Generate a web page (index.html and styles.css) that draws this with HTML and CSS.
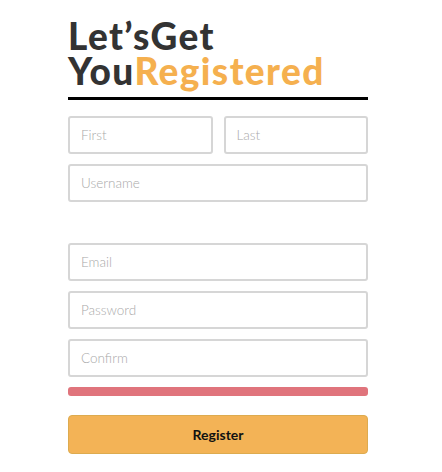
FILE: index.html
```html
<!DOCTYPE html>
<html>
<head>
<meta charset="utf-8">
<link rel="stylesheet" href="styles.css">
</head>
<body>
<div class="wrap">
  <h1 class="title">Let’sGet<br>You<span class="accent">Registered</span></h1>
  <form class="form">
    <div class="row">
      <input class="field" type="text" placeholder="First">
      <input class="field" type="text" placeholder="Last">
    </div>
    <input class="field" type="text" placeholder="Username">
    <div class="spacer"></div>
    <input class="field" type="email" placeholder="Email">
    <input class="field" type="password" placeholder="Password">
    <input class="field" type="password" placeholder="Confirm">
    <div class="strength"></div>
    <button class="btn" type="button">Register</button>
  </form>
</div>
</body>
</html>
```

FILE: styles.css
```css
html, body {
  margin: 0;
  padding: 0;
  background: #fff;
}
body {
  font-family: Lato, "Open Sans", sans-serif;
}
.wrap {
  width: 300px;
  margin: 0 0 0 68px;
  padding-top: 18px;
}
.title {
  margin: 0;
  font-size: 37px;
  line-height: 35px;
  font-weight: 900;
  letter-spacing: 1.4px;
  color: #333;
  padding-bottom: 9px;
  border-bottom: 3px solid #000;
}
.accent {
  color: #f5b04f;
}
.form {
  display: flex;
  flex-direction: column;
  gap: 10px;
  margin-top: 16px;
}
.row {
  display: flex;
  gap: 11px;
}
.row .field {
  flex: 1;
  min-width: 0;
}
.field {
  box-sizing: border-box;
  height: 38px;
  border: 2px solid #d6d6d6;
  border-radius: 3px;
  padding: 0 11px;
  font-family: Lato, sans-serif;
  font-size: 13.5px;
  font-weight: 300;
  color: #333;
  outline: none;
  background: #fff;
}
.field::placeholder {
  color: #a9a9a9;
}
.spacer {
  height: 21px;
}
.strength {
  height: 9px;
  border-radius: 3px;
  background: #e0747c;
}
.btn {
  margin-top: 9px;
  height: 39px;
  border: 1px solid #ddab4f;
  border-radius: 4px;
  background: #f3b356;
  font-family: Lato, sans-serif;
  font-weight: 700;
  font-size: 14px;
  color: #111;
}
```
